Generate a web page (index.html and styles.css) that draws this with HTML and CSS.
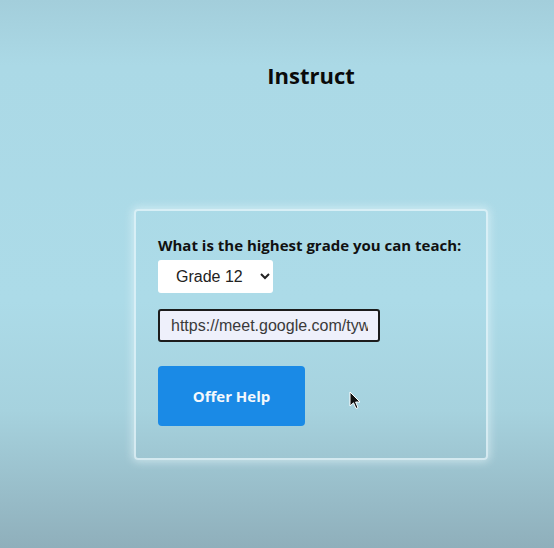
FILE: index.html
```html
<!DOCTYPE html>
<html>
<head>
<meta charset="utf-8">
<link rel="stylesheet" href="styles.css">
</head>
<body>
<div class="page">
  <h1 class="title">Instruct</h1>
  <div class="card">
    <label class="label" for="grade">What is the highest grade you can teach:</label>
    <select id="grade" class="select">
      <option>Grade 12</option>
    </select>
    <input class="link" type="text" value="https://meet.google.com/tyw-abcd-efg">
    <div class="actions">
      <button class="btn">Offer Help</button>
    </div>
  </div>
</div>
<svg class="cursor" width="12" height="19" viewBox="0 0 12 19"><path d="M1 1 L1 15 L4.5 11.8 L7 17.5 L9 16.6 L6.6 11 L11 11 Z" fill="#111" stroke="#fff" stroke-width="1"/></svg>
</body>
</html>
```
FILE: styles.css
```css
html, body {
  margin: 0;
  padding: 0;
  height: 100%;
}
body {
  background: linear-gradient(to bottom, #a3cedb 0%, #abd9e6 12%, #acdbe8 55%, #a6d2de 75%, #8fafbb 100%);
  font-family: "Open Sans", "DejaVu Sans", sans-serif;
  color: #111;
  position: relative;
  overflow: hidden;
}
.page {
  width: 354px;
  margin-left: 134px;
  padding-top: 58px;
}
.title {
  margin: 0;
  text-align: center;
  font-size: 22px;
  font-weight: 700;
  line-height: 34px;
  color: #0a0a0a;
}
.card {
  margin-top: 117px;
  box-sizing: border-box;
  height: 251px;
  border: 2px solid rgba(235, 248, 252, 0.7);
  border-radius: 4px;
  box-shadow: 0 0 8px 2px rgba(235, 248, 252, 0.55);
  padding: 24px 22px;
  display: flex;
  flex-direction: column;
  align-items: flex-start;
}
.label {
  font-size: 15px;
  font-weight: 700;
  line-height: 20px;
  color: #111;
  margin-bottom: 5px;
  white-space: nowrap;
}
.select {
  width: 115px;
  height: 33px;
  border: none;
  border-radius: 3px;
  background: #fff;
  font-family: "Liberation Sans", Arial, sans-serif;
  font-size: 16px;
  color: #222;
  padding: 0 10px 0 14px;
}
.link {
  margin-top: 16px;
  box-sizing: border-box;
  width: 222px;
  height: 33px;
  border: 2px solid #1c1c1c;
  border-radius: 3px;
  background: #eef0fb;
  font-family: "Liberation Sans", Arial, sans-serif;
  font-size: 16px;
  color: #3a3a3a;
  padding: 0 10px 0 11px;
}
.actions {
  margin-top: 24px;
}
.btn {
  width: 147px;
  height: 60px;
  border: none;
  border-radius: 4px;
  background: #1a8ae6;
  color: #f4f8fc;
  font-family: "Open Sans", "DejaVu Sans", sans-serif;
  font-size: 15px;
  font-weight: 700;
}
.cursor {
  position: absolute;
  left: 349px;
  top: 391px;
}
```
